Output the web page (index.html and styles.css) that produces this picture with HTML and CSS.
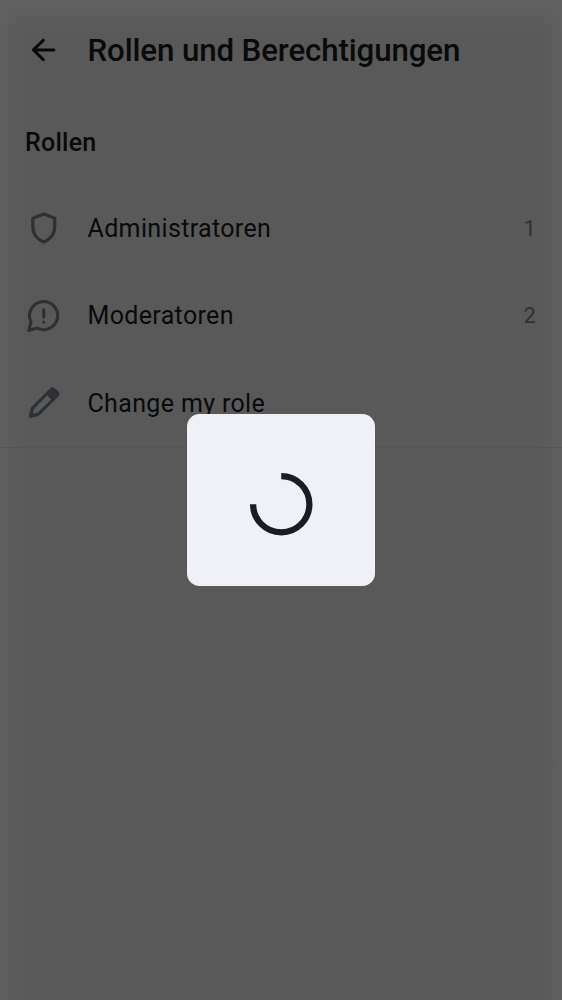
FILE: index.html
```html
<!DOCTYPE html>
<html lang="de">
<head>
<meta charset="utf-8">
<title>Rollen und Berechtigungen</title>
<link rel="stylesheet" href="styles.css">
</head>
<body>
<main class="screen">
  <header class="app-bar">
    <svg class="icon icon-back" viewBox="0 0 24 24" fill="none" stroke="currentColor" stroke-width="1.95" stroke-linecap="round" stroke-linejoin="round"><path d="M11.7 5.9 5.4 12.1l6.3 6.2M5.6 12.1h12.9"/></svg>
    <h1 class="title">Rollen und Berechtigungen</h1>
  </header>
  <h2 class="section-title">Rollen</h2>
  <ul class="roles">
    <li class="row">
      <svg class="icon" viewBox="0 0 24 24" fill="none" stroke="currentColor" stroke-width="2.1" stroke-linejoin="round"><path d="M12 3.2 19 5.9v5.3c0 4.7-2.7 8.4-7 9.9-4.3-1.5-7-5.2-7-9.9V5.9z"/></svg>
      <span class="label">Administratoren</span>
      <span class="count">1</span>
    </li>
    <li class="row">
      <svg class="icon" viewBox="0 0 24 24" fill="none" stroke="currentColor" stroke-width="2" stroke-linecap="round" stroke-linejoin="round"><path d="M2.4 21.4 3.9 16A9 9 0 1 1 7.8 19.9z"/><path d="M12 8v4.8M12 16v.1"/></svg>
      <span class="label">Moderatoren</span>
      <span class="count">2</span>
    </li>
    <li class="row">
      <svg class="icon" viewBox="0 0 24 24" fill="currentColor" fill-rule="evenodd"><path d="M16.2 2.6q1.4-1.2 2.8 0L21.5 5q1.2 1.4 0 2.8L9.3 20q-.3.3-.8.4l-4.9 1.3q-1.5.2-1.2-1.3L3.7 15.4q.1-.5.5-.9zM14.2 7.4 5.8 16 5 19.1 8.1 18.2 16.8 9.9z"/></svg>
      <span class="label">Change my role</span>
    </li>
  </ul>
  <div class="scrim">
    <div class="dialog">
      <svg class="spinner" viewBox="0 0 40 40" fill="none" stroke="currentColor" stroke-width="4"><path d="M20 2a18 18 0 1 1-18 18"/></svg>
    </div>
  </div>
</main>
</body>
</html>
```
FILE: styles.css
```css
* {
  box-sizing: border-box;
}

body {
  margin: 0;
  font-family: Roboto, "Liberation Sans", sans-serif;
  color: #090a0c;
}

.screen {
  position: relative;
  height: 1000px;
  overflow: hidden;
  background:
    linear-gradient(to bottom, rgba(97, 97, 97, 0.8), rgba(89, 89, 89, 0) 34px),
    linear-gradient(to right, rgba(96, 96, 96, 0.8), rgba(89, 89, 89, 0) 24px),
    linear-gradient(to left, rgba(96, 96, 96, 0.8), rgba(89, 89, 89, 0) 24px),
    #595959;
}

.app-bar {
  display: flex;
  align-items: center;
  gap: 25px;
  height: 100px;
  padding: 0 25px;
}

.icon {
  flex: none;
  width: 37.5px;
  height: 37.5px;
  color: #2d3136;
}

.icon-back {
  color: #090a0c;
}

.title {
  margin: 0;
  padding-top: 1px;
  font-size: 31.25px;
  font-weight: 500;
  line-height: 44px;
  letter-spacing: -0.12px;
  white-space: nowrap;
}

.section-title {
  display: flex;
  align-items: center;
  height: 84.4px;
  margin: 0;
  padding: 0 25px;
  font-size: 25px;
  font-weight: 500;
  letter-spacing: 0.25px;
}

.roles {
  margin: 0;
  padding: 0;
  list-style: none;
  border-bottom: 1px solid #545454;
}

.row {
  display: flex;
  align-items: center;
  gap: 25px;
  height: 87.5px;
  padding: 0 25px;
}

.label {
  flex: 1;
  font-size: 25px;
  letter-spacing: 0.35px;
}

.count {
  padding-right: 0.9px;
  font-size: 21.875px;
  letter-spacing: 0.39px;
  color: #2d3136;
}

.scrim {
  position: absolute;
  inset: 0;
  display: flex;
  align-items: center;
  justify-content: center;
}

.dialog {
  display: flex;
  align-items: center;
  justify-content: center;
  width: 187.5px;
  height: 172px;
  padding-top: 9px;
  border-radius: 12.5px;
  background: #f0f1f6;
}

.spinner {
  width: 62.5px;
  height: 62.5px;
  color: #1b1d22;
  overflow: visible;
}
```
